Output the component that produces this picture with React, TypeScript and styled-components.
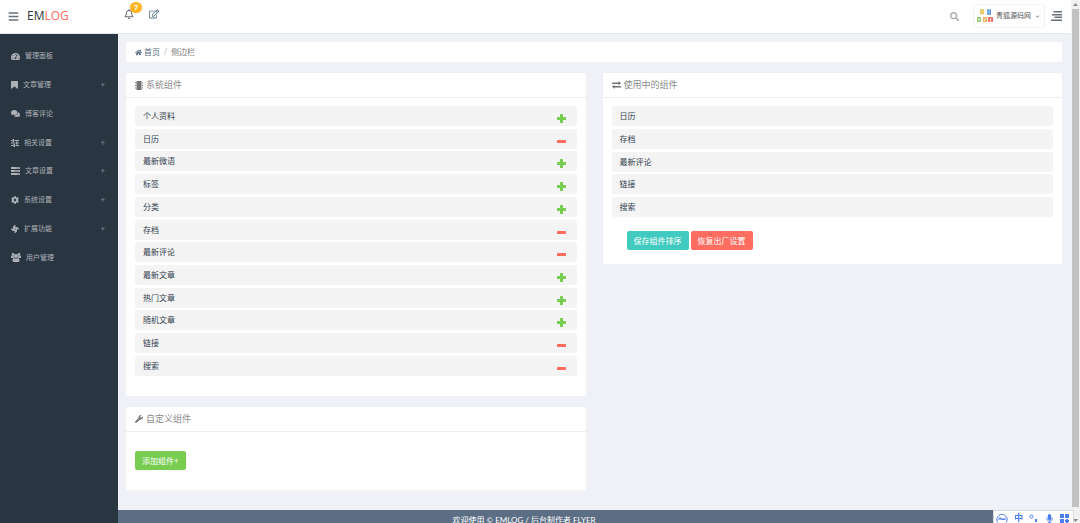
import React from 'react';
import styled, { createGlobalStyle } from 'styled-components';
import { FaBars, FaRegBell, FaRegEdit, FaHome, FaTachometerAlt, FaComments, FaCog, FaWrench, FaSearch, FaCaretDown, FaFan, FaMicrophone } from 'react-icons/fa';

const Global = createGlobalStyle`
  * { box-sizing: border-box; }
  body { margin: 0; overflow: hidden; background: #eff1f7; color: #32404e; font: 8px/12px "Noto Sans", "Noto Sans CJK SC", sans-serif; }
  button { font: inherit; border: 0; padding: 0; background: none; color: inherit; cursor: pointer; }
  a { color: inherit; text-decoration: none; }
  ul, ol { margin: 0; padding: 0; list-style: none; }
  svg { display: block; flex: none; }
`;

const Frame = styled.div`
  display: grid;
  grid-template-columns: minmax(0, 1fr) 9px;
  height: 100vh;
  overflow: hidden;
`;
const Page = styled.div`
  display: grid;
  grid-template-columns: 118px minmax(0, 1fr);
  grid-template-rows: 34px minmax(0, 1fr);
`;
const Header = styled.header`
  grid-column: 1 / -1;
  display: flex;
  align-items: center;
  background: #fff;
  padding: 0 9px 1px 8px;
  border-bottom: 1px solid #e3e8ea;
`;
const Brand = styled.div`
  display: flex;
  align-items: center;
  gap: 8px;
  width: 115px;
`;
const Logo = styled.a`
  font: 400 12px/16px "Open Sans", sans-serif;
  color: #2a3542;
  span { color: #ff6c60; }
`;
const IconButton = styled.button<{ $tone?: string }>`
  position: relative;
  display: grid;
  place-items: center;
  color: ${p => p.$tone || '#68717a'};
`;
const Tools = styled.div`
  display: flex;
  gap: 15px;
  padding: 0 0 4px 1px;
`;
const Badge = styled.span`
  position: absolute;
  left: 6px;
  top: -7px;
  width: 12px;
  height: 11px;
  border-radius: 6px;
  background: #fcb322;
  color: #fff;
  font: 700 7px/11px "Open Sans", sans-serif;
`;
const Account = styled.div`
  margin-left: auto;
  display: flex;
  align-items: center;
`;
const User = styled.button`
  display: flex;
  align-items: center;
  gap: 3px;
  height: 24px;
  margin: 0 6px 0 14px;
  padding: 0 3px;
  border: 1px solid #f4f4f4;
  border-radius: 3px;
  font-size: 7px;
  color: #555;
  svg:last-child { color: #aaa; }
`;
const Sidebar = styled.aside`
  background: #2a3542;
  padding-top: 8px;
`;
const Menu = styled.ul`
  display: grid;
  grid-auto-rows: 1fr;
  height: 230px;
`;
const MenuLink = styled.a`
  display: flex;
  align-items: center;
  gap: 5px;
  height: 100%;
  padding: 0 13px 0 11px;
  color: #aeb2b7;
  font-size: 7px;
`;
const Expand = styled.span`
  margin-left: auto;
  color: #858d96;
  font-size: 8px;
`;
const Body = styled.div`
  display: flex;
  flex-direction: column;
  min-width: 0;
`;
const Main = styled.main`
  padding: 8px 9px 20px 8px;
`;
const Crumbs = styled.ol`
  display: flex;
  align-items: center;
  gap: 4px;
  height: 20px;
  padding: 0 9px;
  margin-bottom: 11px;
  border-radius: 2px;
  background: #fff;
  color: #7a7a7a;
  a { display: flex; align-items: center; gap: 2px; color: #5b6e84; }
  span { color: #bbb; }
`;
const Columns = styled.div`
  display: grid;
  grid-template-columns: 1fr 1fr;
  gap: 17px;
  align-items: start;
`;
const Stack = styled.div`
  display: grid;
  gap: 11px;
`;
const Panel = styled.section`
  border-radius: 2px;
  background: #fff;
`;
const Title = styled.h2`
  display: flex;
  align-items: center;
  gap: 3px;
  height: 25px;
  margin: 0;
  padding: 0 9px;
  border-bottom: 1px solid #eceef1;
  font-size: 9px;
  font-weight: 400;
  color: #8b8b8b;
  svg { color: #737373; }
`;
const Content = styled.div<{ $bottom: number }>`
  padding: 8px 9px ${p => p.$bottom}px;
`;
const List = styled.ul<{ $height: number }>`
  display: flex;
  flex-direction: column;
  justify-content: space-between;
  height: ${p => p.$height}px;
`;
const Row = styled.li`
  display: flex;
  align-items: center;
  justify-content: space-between;
  height: 20px;
  padding: 0 11px 0 8px;
  border-radius: 2px;
  background: #f4f4f4;
`;
const Toggle = styled.button<{ $on: boolean }>`
  padding-top: 5px;
  color: ${p => (p.$on ? '#ff6c60' : '#78cd51')};
`;
const Actions = styled.div<{ $indent: number; $top: number }>`
  display: flex;
  gap: 2px;
  padding: ${p => p.$top}px 0 0 ${p => p.$indent}px;
`;
const Button = styled.button<{ $color: string }>`
  height: 19px;
  padding: 0 7px;
  border-radius: 2px;
  background: ${p => p.$color};
  color: #fff;
`;
const Footer = styled.footer`
  flex: 1 0 13px;
  padding: 5px 141px 0 0;
  background: #5b6e84;
  color: #fff;
  font-family: Lato, "Noto Sans CJK SC", sans-serif;
  line-height: 11px;
  text-align: center;
  white-space: nowrap;
`;
const Scroll = styled.div`
  display: flex;
  flex-direction: column;
  align-items: center;
  justify-content: space-between;
  padding: 2px 0 3px;
  background: #f1f1f1;
  color: #8a8a8a;
`;
const Thumb = styled.div`
  flex: 1;
  width: 7px;
  margin: 2px 0 11px;
  background: #c1c1c1;
`;
const InputBar = styled.div`
  position: fixed;
  right: 6px;
  bottom: 0;
  display: flex;
  align-items: center;
  justify-content: space-between;
  width: 81px;
  height: 13px;
  padding: 2px 4px 0 2px;
  border: 1px solid #d5dbe2;
  border-bottom: 0;
  background: #fff;
  color: #4c7df0;
  font-size: 9px;
  line-height: 10px;
  font-weight: 700;
`;

type GlyphProps = { w: number; h: number; box: string; d: string };
const Glyph = ({ w, h, box, d }: GlyphProps) => (
  <svg width={w} height={h} viewBox={box}><path fill="currentColor" fillRule="evenodd" d={d} /></svg>
);

const Notebook = () => <Glyph w={8} h={9} box="0 0 16 18" d="M3 0h10v18H3zM0 3h2v2H0zm0 5h2v2H0zm0 5h2v2H0zM14 3h2v2h-2zm0 5h2v2h-2zm0 5h2v2h-2z" />;
const Plus = () => <Glyph w={9} h={9} box="0 0 18 18" d="M7 0h4q1 0 1 1v5h5q1 0 1 1v4q0 1-1 1h-5v5q0 1-1 1H7q-1 0-1-1v-5H1q-1 0-1-1V7q0-1 1-1h5V1q0-1 1-1z" />;
const Minus = () => <Glyph w={9} h={9} box="0 0 18 18" d="M1 6h16q1 0 1 1v4q0 1-1 1H1q-1 0-1-1V7q0-1 1-1z" />;
const Exchange = () => <Glyph w={9} h={8} box="0 0 18 16" d="M0 3h13V0l5 4.500-5 4V6H0zM18 13H5v3l-5-4.500 5-4V10h13z" />;
const Lines = () => <Glyph w={11} h={10} box="0 0 22 20" d="M5 0h17v3H5zM2 6h20v3H2zM7 11h15v3H7zM0 17h22v3H0z" />;
const Ribbon = () => <Glyph w={7} h={8} box="0 0 14 16" d="M1 0h12q1 0 1 1v15l-7-5-7 5V1q0-1 1-1z" />;
const Sliders = () => <Glyph w={8} h={8} box="0 0 16 16" d="M0 2h2v2H0zM3 0h3v6H3zM7 2h9v2H7zM0 7h9v2H0zM10 5h3v6h-3zM14 7h2v2h-2zM0 12h4v2H0zM5 10h3v6H5zM9 12h7v2H9z" />;
const Tasks = () => <Glyph w={9} h={8} box="0 0 18 16" d="M0 0h18v4H0zM11 1.500v1h6v-1zM0 6h18v4H0zM7 7.500v1h10v-1zM0 12h18v4H0zM13 13.500v1h4v-1z" />;
const Group = () => <Glyph w={10} h={9} box="0 0 20 18" d="M4 0a2.700 2.700 0 1 1 0 5.400A2.700 2.700 0 0 1 4 0zM16 0a2.700 2.700 0 1 1 0 5.400A2.700 2.700 0 0 1 16 0zM10 2a4 4 0 1 1 0 8 4 4 0 0 1 0-8zM0 9q0-4 2-4 2 1 3.500.5Q5 8 6.500 10H1.500Q0 10 0 9zM20 9q0-4-2-4-2 1-3.500.5.5 2.500-1 4.500h5Q20 10 20 9zM6 10q4 2.500 8 0 3 0 3 5.500 0 2.500-2.500 2.500h-9Q3 18 3 15.500 3 10 6 10z" />;

const Avatar = () => (
  <svg width="16" height="16" viewBox="0 0 16 16">
    <path fill="#e9cf72" d="M3 1h4v6l-2-1-2 1z" />
    <path fill="#78aee0" d="M10 1h2v6h-2zM12 2h2v5h-2z" />
    <path fill="#5b95d6" d="M13 1h1v6h-1z" />
    <path fill="#9bcb77" d="M0 9h4v5H0z" />
    <path fill="#efb04d" d="M6 9h4v5H6z" />
    <path fill="#ee736b" d="M11 9h5v5h-1l-1.500-1-1.500 1h-1z" />
    <path stroke="#fff" d="M2 10.500v2M7 13l2-3M13.500 10.500v1.500" />
  </svg>
);

const menu = [
  { icon: <FaTachometerAlt size={9} />, label: '管理面板', sub: false },
  { icon: <Ribbon />, label: '文章管理', sub: true },
  { icon: <FaComments size={9} />, label: '博客评论', sub: false },
  { icon: <Sliders />, label: '相关设置', sub: true },
  { icon: <Tasks />, label: '文章设置', sub: true },
  { icon: <FaCog size={8} />, label: '系统设置', sub: true },
  { icon: <FaFan size={8} />, label: '扩展功能', sub: true },
  { icon: <Group />, label: '用户管理', sub: false },
];
const widgets: [string, boolean][] = [
  ['个人资料', false], ['日历', true], ['最新微语', false], ['标签', false], ['分类', false], ['存档', true],
  ['最新评论', true], ['最新文章', false], ['热门文章', false], ['随机文章', false], ['链接', true], ['搜索', true],
];
const active = ['日历', '存档', '最新评论', '链接', '搜索'];

export default function App() {
  return (
    <Frame>
      <Global />
      <Page>
        <Header>
          <Brand>
            <IconButton aria-label="菜单"><FaBars size={11} /></IconButton>
            <Logo href="#">EM<span>LOG</span></Logo>
          </Brand>
          <Tools>
            <IconButton aria-label="通知"><FaRegBell size={10} /><Badge>7</Badge></IconButton>
            <IconButton aria-label="写文章" $tone="#5b7482"><FaRegEdit size={10} /></IconButton>
          </Tools>
          <Account>
            <IconButton aria-label="查找" $tone="#aaa"><FaSearch size={9} /></IconButton>
            <User><Avatar />青狐源码网<FaCaretDown size={7} /></User>
            <IconButton aria-label="侧栏"><Lines /></IconButton>
          </Account>
        </Header>
        <Sidebar>
          <nav>
            <Menu>
              {menu.map(({ icon, label, sub }) => (
                <li key={label}>
                  <MenuLink href="#">{icon}{label}{sub && <Expand>+</Expand>}</MenuLink>
                </li>
              ))}
            </Menu>
          </nav>
        </Sidebar>
        <Body>
          <Main>
            <Crumbs>
              <li><a href="#"><FaHome size={7} />首页</a></li>
              <li><span>/</span></li>
              <li>侧边栏</li>
            </Crumbs>
            <Columns>
              <Stack>
                <Panel>
                  <Title><Notebook />系统组件</Title>
                  <Content $bottom={20}>
                    <List $height={270}>
                      {widgets.map(([name, on]) => (
                        <Row key={name}>
                          {name}
                          <Toggle $on={on} aria-label={(on ? '移除' : '添加') + name}>{on ? <Minus /> : <Plus />}</Toggle>
                        </Row>
                      ))}
                    </List>
                  </Content>
                </Panel>
                <Panel>
                  <Title><FaWrench size={8} />自定义组件</Title>
                  <Content $bottom={20}>
                    <Actions $indent={0} $top={11}><Button $color="#78cd51">添加组件+</Button></Actions>
                  </Content>
                </Panel>
              </Stack>
              <Panel>
                <Title><Exchange />使用中的组件</Title>
                <Content $bottom={14}>
                  <List $height={111}>{active.map(name => <Row key={name}>{name}</Row>)}</List>
                  <Actions $indent={15} $top={14}>
                    <Button $color="#41cac0">保存组件排序</Button>
                    <Button $color="#ff6c60">恢复出厂设置</Button>
                  </Actions>
                </Content>
              </Panel>
            </Columns>
          </Main>
          <Footer>欢迎使用 © EMLOG / 后台制作者 FLYER</Footer>
        </Body>
      </Page>
      <Scroll>
        <svg width="5" height="5" viewBox="0 0 5 5"><path fill="currentColor" d="M0 4h5L2.5 1z" /></svg>
        <Thumb />
        <svg width="5" height="5" viewBox="0 0 5 5"><path fill="currentColor" d="M0 1h5L2.5 4z" /></svg>
      </Scroll>
      <InputBar>
        <svg width="12" height="10" viewBox="0 0 12 10" fill="none" stroke="currentColor"><path d="M2 9.500a5 5 0 1 1 8 0M3 7V5h2v2M6 5v2l1-1 1 1V5M9 5v2" /></svg>
        <span>中</span>
        <svg width="9" height="9" viewBox="0 0 9 9" fill="none" stroke="currentColor"><circle cx="2.500" cy="2.500" r="1.500" /><path strokeWidth="2" d="M7 5v3" /></svg>
        <FaMicrophone size={9} />
        <svg width="9" height="9" viewBox="0 0 9 9" fill="currentColor"><path d="M0 0h4v4H0zM5 0h4v4H5zM0 5h4v4H0zM6 5h2v1h1v2H8v1H6V8H5V6h1z" /></svg>
      </InputBar>
    </Frame>
  );
}
